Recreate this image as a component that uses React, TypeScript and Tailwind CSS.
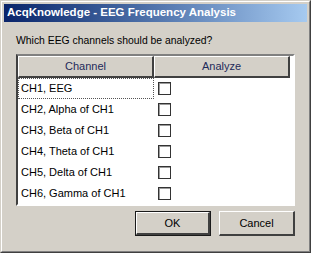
const channels = [
  "CH1, EEG",
  "CH2, Alpha of CH1",
  "CH3, Beta of CH1",
  "CH4, Theta of CH1",
  "CH5, Delta of CH1",
  "CH6, Gamma of CH1",
];

function Checkbox() {
  return (
    <div className="w-[13px] h-[13px] border border-[#333333] bg-white shadow-[inset_1px_1px_0_#9a9a9a]" />
  );
}

function HeaderCell({ label }: { label: string }) {
  return (
    <div className="w-[136px] h-[22px] flex items-center justify-center bg-[#d4d0c8] border-t border-l border-t-white border-l-white border-b-2 border-r-2 border-b-[#404040] border-r-[#404040] text-[#1e2a5a]">
      {label}
    </div>
  );
}

function Button({ label, isDefault }: { label: string; isDefault?: boolean }) {
  return (
    <div
      className={
        isDefault
          ? "w-[76px] h-[25px] border border-[#1a1a1a]"
          : "w-[76px] h-[25px]"
      }
    >
      <div className="w-full h-full flex items-center justify-center bg-[#d4d0c8] border-t border-l border-t-white border-l-white border-b-2 border-r-2 border-b-[#404040] border-r-[#404040] text-black">
        {label}
      </div>
    </div>
  );
}

export default function App() {
  return (
    <div className="w-[311px] h-[253px] border border-t-[#d4d0c8] border-l-[#d4d0c8] border-b-[#404040] border-r-[#404040] bg-[#d4d0c8] font-['Liberation_Sans',sans-serif] text-[11px]">
      <div className="w-full h-full border border-t-white border-l-white border-b-[#808080] border-r-[#808080] p-[2px] flex flex-col">
        {/* Title bar */}
        <div className="h-[18px] flex items-center pl-[3px] bg-gradient-to-r from-[#0a246a] to-[#a6caf0] text-white font-bold text-[11.5px]">
          AcqKnowledge - EEG Frequency Analysis
        </div>

        <div className="pl-[12px] pt-[12px] leading-[13px] text-black text-[10.4px]">
          Which EEG channels should be analyzed?
        </div>

        {/* Table */}
        <div className="ml-[12px] mt-[7px] w-[279px] h-[152px] border-2 border-t-[#808080] border-l-[#404040] border-b-white border-r-white bg-white">
          <div className="flex">
            <HeaderCell label="Channel" />
            <HeaderCell label="Analyze" />
          </div>
          {channels.map((name, i) => (
            <div key={name} className="flex h-[21px] items-center text-black">
              <div
                className={
                  i === 0
                    ? "w-[136px] h-full flex items-center pl-[2px] border border-dotted border-[#555555]"
                    : "w-[136px] h-full flex items-center pl-[3px]"
                }
              >
                {name}
              </div>
              <div className="pl-[4px]">
                <Checkbox />
              </div>
            </div>
          ))}
        </div>

        {/* Buttons */}
        <div className="flex justify-end gap-[8px] pr-[12px] mt-[5px]">
          <Button label="OK" isDefault />
          <Button label="Cancel" />
        </div>
      </div>
    </div>
  );
}
